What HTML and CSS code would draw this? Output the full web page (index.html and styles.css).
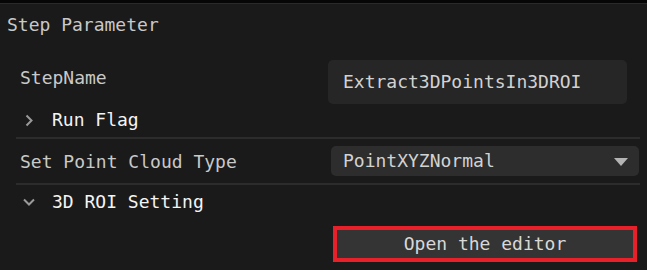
FILE: index.html
```html
<!DOCTYPE html>
<html>
<head>
<meta charset="utf-8">
<link rel="stylesheet" href="styles.css">
</head>
<body>
<div class="topbar"></div>
<div class="title">Step Parameter</div>
<div class="row name-row">
  <span class="label">StepName</span>
  <div class="input">Extract3DPointsIn3DROI</div>
</div>
<div class="group-row flag-row">
  <svg class="chev-right" width="8" height="13" viewBox="0 0 8 13"><polyline points="1.5,1.5 6.5,6.5 1.5,11.5" fill="none" stroke="#9a9a9a" stroke-width="2"/></svg>
  <span class="group-label">Run Flag</span>
</div>
<div class="sep"></div>
<div class="row type-row">
  <span class="label">Set Point Cloud Type</span>
  <div class="select">
    <span>PointXYZNormal</span>
    <svg class="tri" width="14" height="8" viewBox="0 0 14 8"><polygon points="0,0 14,0 7,8" fill="#b4b4b4"/></svg>
  </div>
</div>
<div class="sep"></div>
<div class="group-row roi-row">
  <svg class="chev-down" width="12" height="8" viewBox="0 0 12 8"><polyline points="1,1.5 6,6.5 11,1.5" fill="none" stroke="#9a9a9a" stroke-width="2"/></svg>
  <span class="group-label">3D ROI Setting</span>
</div>
<div class="btn-row">
  <button class="btn">Open the editor</button>
</div>
</body>
</html>
```

FILE: styles.css
```css
html, body {
  margin: 0;
  padding: 0;
  background: #1a1a1a;
  width: 647px;
  height: 270px;
  overflow: hidden;
  font-family: "DejaVu Sans Mono", "Liberation Mono", monospace;
  font-size: 18px;
  line-height: 20px;
  color: #c9c9c9;
}

.topbar {
  height: 3px;
  background: #060606;
  border-bottom: 1px solid #2a2a2a;
}

.title {
  padding: 11px 0 0 7px;
  height: 20px;
}

.row {
  display: flex;
  justify-content: space-between;
}

.name-row {
  margin-top: 25px;
  height: 44px;
  padding: 0 20px;
  align-items: flex-start;
}

.name-row .label {
  margin-top: 8px;
}

.input {
  width: 299px;
  height: 44px;
  box-sizing: border-box;
  padding-left: 15px;
  display: flex;
  align-items: center;
  background: #262626;
  border-radius: 5px;
  color: #d2d2d2;
}

.group-row {
  display: flex;
  align-items: center;
  height: 20px;
}

.group-label {
  color: #f4f4f4;
}

.flag-row {
  margin-top: 6px;
  padding-left: 25px;
}

.flag-row .group-label {
  margin-left: 19px;
}

.sep {
  height: 2px;
  background: #2c2c2c;
  margin: 0 7px 0 16px;
}

.flag-row + .sep {
  margin-top: 7px;
}

.type-row {
  padding: 7px 8px 7px 20px;
  align-items: center;
}

.type-row .label {
  margin-top: 2px;
}

.select {
  width: 308px;
  height: 30px;
  box-sizing: border-box;
  padding: 0 11px 0 12px;
  display: flex;
  align-items: center;
  justify-content: space-between;
  background: #2d2d2d;
  border-radius: 5px;
  color: #d2d2d2;
}

.tri {
  margin-top: 1px;
}

.roi-row {
  margin-top: 7px;
  padding-left: 23px;
}

.roi-row .group-label {
  margin-left: 17px;
}

.btn-row {
  margin-top: 14px;
  padding-left: 333px;
}

.btn {
  width: 304px;
  height: 36px;
  box-sizing: border-box;
  border: 4px solid #e8202a;
  background: #343434;
  color: #d8d8d8;
  font-family: inherit;
  font-size: 18px;
  line-height: 20px;
  padding: 0;
  margin: 0;
  display: block;
}
```
